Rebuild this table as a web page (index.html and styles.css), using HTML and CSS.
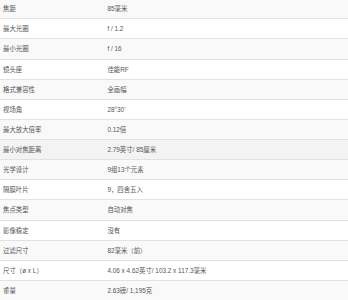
FILE: index.html
```html
<!DOCTYPE html>
<html lang="zh-CN">
<head>
<meta charset="utf-8">
<link rel="stylesheet" href="styles.css">
</head>
<body>
<table class="spec-table">
  <tbody>
    <tr><td class="label">焦距</td><td>85毫米</td></tr>
    <tr><td class="label">最大光圈</td><td>f / 1.2</td></tr>
    <tr><td class="label">最小光圈</td><td>f / 16</td></tr>
    <tr><td class="label">镜头座</td><td>佳能RF</td></tr>
    <tr><td class="label">格式兼容性</td><td>全画幅</td></tr>
    <tr><td class="label">视场角</td><td>28°30'</td></tr>
    <tr><td class="label">最大放大倍率</td><td>0.12倍</td></tr>
    <tr class="is-hover"><td class="label">最小对焦距离</td><td>2.79英寸/ 85厘米</td></tr>
    <tr><td class="label">光学设计</td><td>9组13个元素</td></tr>
    <tr><td class="label">隔膜叶片</td><td>9，四舍五入</td></tr>
    <tr><td class="label">焦点类型</td><td>自动对焦</td></tr>
    <tr><td class="label">影像稳定</td><td>没有</td></tr>
    <tr><td class="label">过滤尺寸</td><td>82毫米（前）</td></tr>
    <tr><td class="label">尺寸（ø x L）</td><td>4.06 x 4.62英寸/ 103.2 x 117.3毫米</td></tr>
    <tr><td class="label">重量</td><td>2.63磅/ 1,195克</td></tr>
  </tbody>
</table>
</body>
</html>
```
FILE: styles.css
```css
html, body {
  margin: 0;
  padding: 0;
  background: #ffffff;
}
body {
  font-family: "Liberation Sans", Arial, "Noto Sans CJK SC", sans-serif;
  font-size: 6.4px;
  color: #555555;
}
.spec-table {
  width: 100%;
  border-collapse: collapse;
  border-spacing: 0;
  margin-top: -1.8px;
}
.spec-table td {
  border-top: 1px solid #e2e2e2;
  padding: 4px 3px;
  line-height: 11.13px;
  vertical-align: top;
  text-align: left;
  white-space: nowrap;
}
.spec-table td.label {
  width: 30%;
}
.spec-table tr:nth-child(odd) {
  background: #f9f9f9;
}
.spec-table tr.is-hover {
  background: #f3f3f3;
}
```
